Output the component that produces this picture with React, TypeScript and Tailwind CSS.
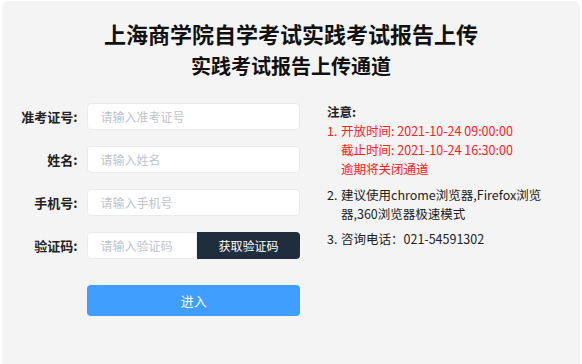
import React from "react";

const font = { fontFamily: '"Noto Sans CJK SC", "Noto Sans", sans-serif' };

function Row({ label, placeholder }: { label: string; placeholder: string }) {
  return (
    <div className="flex items-center h-[27px]">
      <div className="w-[78px] text-right text-[13px] font-bold text-[#222] pr-[2px]">{label}</div>
      <div className="ml-[8px] w-[214px] h-[27px] bg-white border border-[#ebebeb] rounded-[4px] flex items-center pl-[12px] text-[12px] text-[#c0c4cc]">
        {placeholder}
      </div>
    </div>
  );
}

export default function App() {
  return (
    <div className="w-[582px] h-[364px] bg-white overflow-hidden" style={font}>
      <div className="mx-[2px] mt-[1px] h-[370px] rounded-t-[6px] bg-[#f4f4f4]">
        <div className="pt-[17px] text-center">
          <div className="text-[22px] leading-[30px] font-bold text-[#111]">上海商学院自学考试实践考试报告上传</div>
          <div className="mt-[4px] text-[20px] leading-[28px] font-bold text-[#111]">实践考试报告上传通道</div>
        </div>
        <div className="flex mt-[23px]">
          <div className="w-[298px] flex flex-col gap-[16px]">
            <Row label="准考证号:" placeholder="请输入准考证号" />
            <Row label="姓名:" placeholder="请输入姓名" />
            <Row label="手机号:" placeholder="请输入手机号" />
            <div className="flex items-center h-[27px]">
              <div className="w-[78px] text-right text-[13px] font-bold text-[#222] pr-[2px]">验证码:</div>
              <div className="ml-[8px] w-[214px] h-[27px] flex">
                <div className="flex-1 bg-white border border-[#ebebeb] rounded-l-[4px] flex items-center pl-[12px] text-[12px] text-[#c0c4cc]">
                  请输入验证码
                </div>
                <div className="w-[103px] bg-[#1f2d3d] rounded-r-[4px] flex items-center justify-center text-[12px] text-white">
                  获取验证码
                </div>
              </div>
            </div>
            <div className="flex mt-[10px]">
              <div className="w-[86px]" />
              <div className="w-[214px] h-[31px] bg-[#409eff] rounded-[4px] flex items-center justify-center text-[13px] text-white">
                进入
              </div>
            </div>
          </div>
          <div className="ml-[27px] w-[215px] -mt-[1px] text-[12.5px] leading-[19px] text-[#222]">
            <div className="font-bold">注意:</div>
            <div className="flex text-[#ff2020]">
              <span className="w-[14px] shrink-0">1.</span>
              <div>
                <div>开放时间: 2021-10-24 09:00:00</div>
                <div>截止时间: 2021-10-24 16:30:00</div>
                <div>逾期将关闭通道</div>
              </div>
            </div>
            <div className="flex mt-[7px]">
              <span className="w-[14px] shrink-0">2.</span>
              <div>建议使用chrome浏览器,Firefox浏览器,360浏览器极速模式</div>
            </div>
            <div className="flex mt-[6px]">
              <span className="w-[14px] shrink-0">3.</span>
              <div>咨询电话：021-54591302</div>
            </div>
          </div>
        </div>
      </div>
    </div>
  );
}
